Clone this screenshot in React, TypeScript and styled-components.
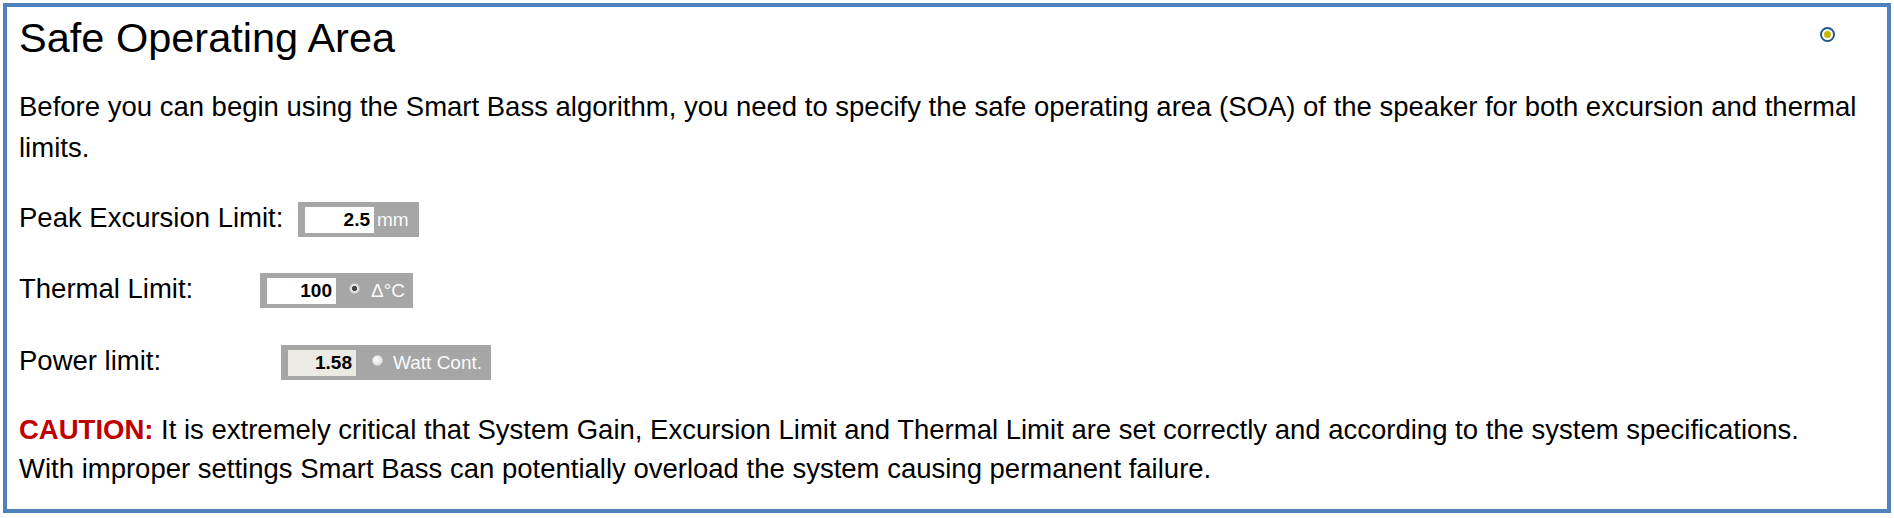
import React from 'react';
import styled, { createGlobalStyle } from 'styled-components';

const GlobalStyle = createGlobalStyle`
  html, body {
    margin: 0;
    padding: 0;
    background: #fff;
  }
  body {
    font-family: "Liberation Sans", Arial, Helvetica, sans-serif;
    color: #000;
  }
`;

const Page = styled.div`
  padding: 3px;
`;

const Panel = styled.section`
  border: 4px solid #4f81bd;
  padding: 7px 0 21px 12px;
  display: flex;
  flex-direction: column;
`;

const HeaderRow = styled.div`
  display: flex;
  justify-content: space-between;
  align-items: flex-start;
`;

const Title = styled.h1`
  margin: 0;
  font-size: 41.5px;
  font-weight: normal;
  line-height: 48px;
`;

const StatusDot = styled.span`
  margin: 13px 52px 0 0;
  width: 15px;
  height: 15px;
  box-sizing: border-box;
  border-radius: 50%;
  border: 2.5px solid #1d5b86;
  background: #fff;
  display: flex;
  align-items: center;
  justify-content: center;

  &::after {
    content: '';
    width: 7px;
    height: 7px;
    border-radius: 50%;
    background: #c8b400;
  }
`;

const Paragraph = styled.p<{ $top: number; $lineHeight?: number }>`
  margin: ${p => p.$top}px 0 0;
  font-size: 27.5px;
  line-height: ${p => p.$lineHeight ?? 40.5}px;
`;

const Fields = styled.div`
  display: flex;
  flex-direction: column;
  gap: 36.5px;
  margin-top: 33.7px;
`;

const FieldRow = styled.div`
  display: flex;
  align-items: flex-start;
`;

const Label = styled.label<{ $width: number }>`
  width: ${p => p.$width}px;
  flex: none;
  font-size: 27.5px;
  line-height: 31px;
`;

const ValueBox = styled.div<{ $width: number }>`
  display: inline-flex;
  align-items: center;
  width: ${p => p.$width}px;
  height: 35px;
  box-sizing: border-box;
  padding: 5px 0 4px 7px;
  background: #a6a6a6;
`;

const ValueInput = styled.input<{ $width?: number }>`
  width: ${p => p.$width ?? 69}px;
  height: 26px;
  box-sizing: border-box;
  border: none;
  outline: none;
  margin: 0;
  padding: 0 4px 0 0;
  text-align: right;
  font-family: inherit;
  font-size: 19px;
  font-weight: bold;
  color: #000;
  background: #fff;

  &:disabled {
    background: #ebebe4;
    color: #000;
  }
`;

const Radio = styled.span<{ $checked?: boolean; $gap: number }>`
  margin-left: ${p => p.$gap}px;
  margin-top: -5px;
  width: 11px;
  height: 11px;
  box-sizing: border-box;
  border-radius: 50%;
  border: 1px solid ${p => (p.$checked ? '#c4c4c4' : '#d2d2d2')};
  background: ${p =>
    p.$checked
      ? 'radial-gradient(circle, #484848 0 2.3px, #e2e2e2 2.9px)'
      : 'radial-gradient(circle at 40% 35%, #ffffff, #dadada)'};
  flex: none;
`;

const Unit = styled.span<{ $gap: number }>`
  margin-left: ${p => p.$gap}px;
  font-size: 19px;
  color: #fafafa;
  white-space: nowrap;
`;

const Caution = styled.strong`
  color: #c00000;
  font-weight: bold;
`;

export default function App() {
  return (
    <Page>
      <GlobalStyle />
      <Panel>
        <HeaderRow>
          <Title>Safe Operating Area</Title>
          <StatusDot />
        </HeaderRow>

        <Paragraph $top={25}>
          Before you can begin using the Smart Bass algorithm, you need to specify the safe operating area (SOA)
          of the speaker for both excursion and thermal limits.
        </Paragraph>

        <Fields>
          <FieldRow>
            <Label $width={279}>Peak Excursion Limit:</Label>
            <ValueBox $width={121}>
              <ValueInput defaultValue="2.5" />
              <Unit $gap={3}>mm</Unit>
            </ValueBox>
          </FieldRow>

          <FieldRow>
            <Label $width={241}>Thermal Limit:</Label>
            <ValueBox $width={153}>
              <ValueInput defaultValue="100" />
              <Radio $checked $gap={13} />
              <Unit $gap={11}>Δ°C</Unit>
            </ValueBox>
          </FieldRow>

          <FieldRow>
            <Label $width={262}>Power limit:</Label>
            <ValueBox $width={210}>
              <ValueInput $width={68} defaultValue="1.58" disabled />
              <Radio $gap={16} />
              <Unit $gap={10}>Watt Cont.</Unit>
            </ValueBox>
          </FieldRow>
        </Fields>

        <Paragraph $top={30} $lineHeight={39}>
          <Caution>CAUTION:</Caution> It is extremely critical that System Gain, Excursion Limit and Thermal Limit
          are set correctly and according to the system specifications.
          <br />
          With improper settings Smart Bass can potentially overload the system causing permanent failure.
        </Paragraph>
      </Panel>
    </Page>
  );
}
